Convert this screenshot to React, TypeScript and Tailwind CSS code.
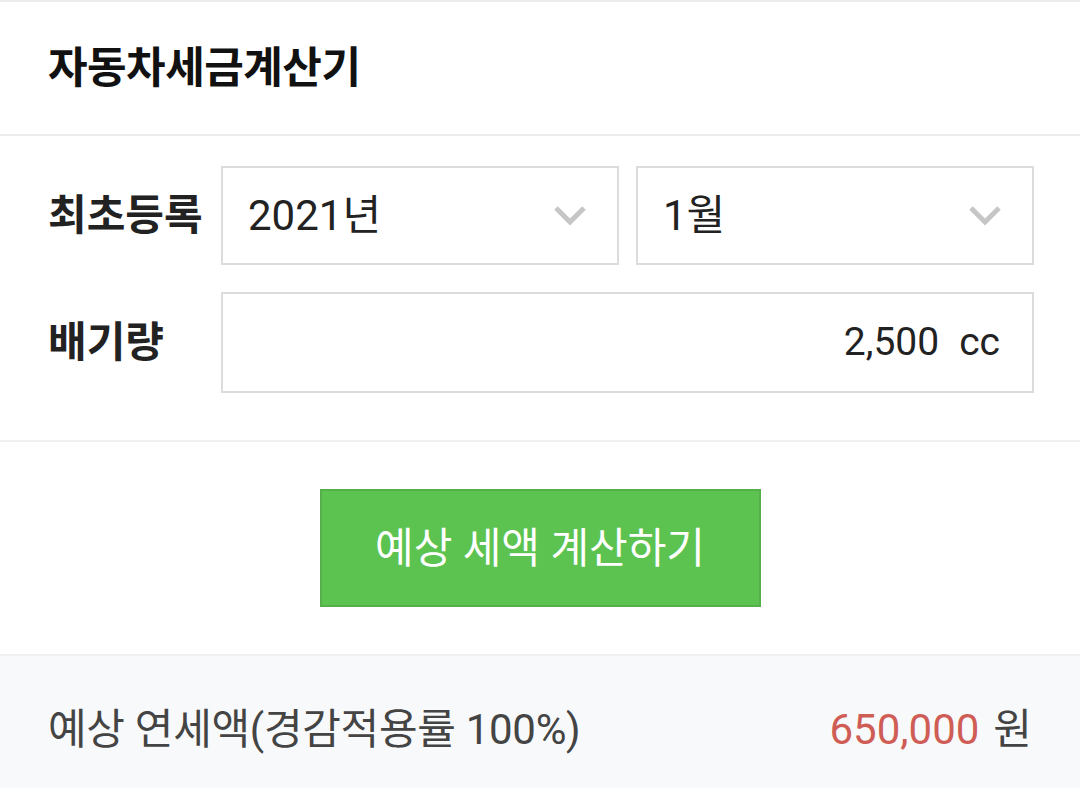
const font = { fontFamily: 'Roboto, "Noto Sans CJK KR", sans-serif' }

function Chevron() {
  return (
    <svg width="34" height="21" viewBox="0 0 34 21" fill="none">
      <polyline points="3,3 17,17 31,3" stroke="#c6c6c6" strokeWidth="5" strokeLinecap="butt" strokeLinejoin="miter" />
    </svg>
  )
}

function Select({ value }: { value: string }) {
  return (
    <div className="flex-1 h-[99px] border-2 border-[#dcdcdc] bg-white flex items-center justify-between pl-[25px] pr-[30px]">
      <span className="text-[42px] text-[#222]">{value}</span>
      <Chevron />
    </div>
  )
}

export default function App() {
  return (
    <div className="w-[1080px] h-[788px] bg-white overflow-hidden" style={font}>
      {/* Header */}
      <div className="h-[136px] border-t-2 border-b-2 border-[#ececec] flex items-center px-[48px]">
        <h1 className="text-[43px] font-bold text-[#111] tracking-[-0.5px]">자동차세금계산기</h1>
      </div>

      {/* Form */}
      <div className="pt-[30px] pb-[47px] pr-[46px] pl-[48px] border-b-2 border-[#f0f0f0] flex flex-col gap-[27px]">
        <div className="flex items-center">
          <span className="w-[173px] text-[42px] font-bold text-[#222]">최초등록</span>
          <div className="flex-1 flex gap-[17px]">
            <Select value="2021년" />
            <Select value="1월" />
          </div>
        </div>
        <div className="flex items-center">
          <span className="w-[173px] text-[42px] font-bold text-[#222]">배기량</span>
          <div className="flex-1 h-[101px] border-2 border-[#dcdcdc] flex items-center justify-end pr-[32px]">
            <span className="text-[39px] text-[#222]">2,500</span>
            <span className="text-[39px] text-[#222] ml-[20px]">cc</span>
          </div>
        </div>
      </div>

      {/* Button */}
      <div className="h-[214px] flex items-center justify-center border-b-2 border-[#f0f0f0]">
        <button className="w-[441px] h-[118px] bg-[#5cc351] border-2 border-[#55b04b] text-white text-[42px]">
          예상 세액 계산하기
        </button>
      </div>

      {/* Result */}
      <div className="h-[132px] bg-[#f8f9fa] flex items-center justify-between pt-[14px] pl-[48px] pr-[48px]">
        <span className="text-[42px] text-[#444] tracking-[-0.3px]">예상 연세액(경감적용률 100%)</span>
        <span className="text-[42px]">
          <span className="text-[#cf5d56]">650,000</span>
          <span className="text-[#444] ml-[14px]">원</span>
        </span>
      </div>
    </div>
  )
}
